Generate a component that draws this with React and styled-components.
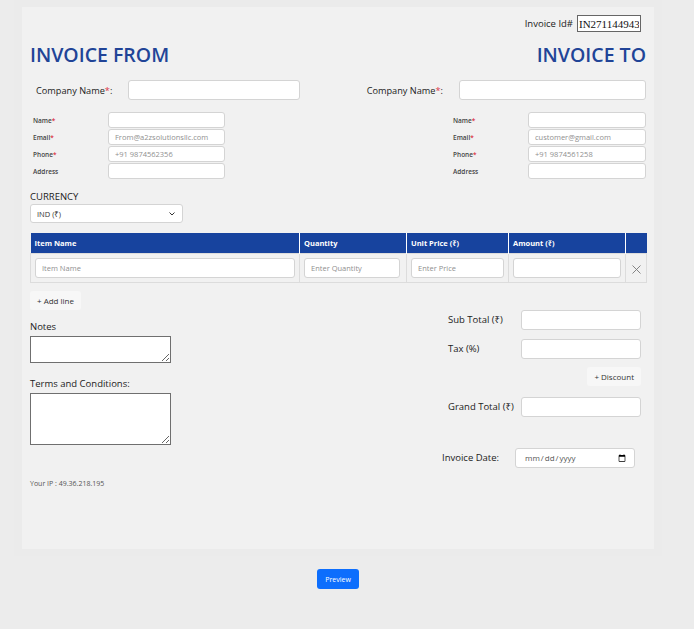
import React from 'react'
import styled, { createGlobalStyle } from 'styled-components'

const GlobalStyle = createGlobalStyle`
    body {
        margin: 0;
        background: #ececec;
        font-family: "Open Sans", "Noto Sans", Arial, sans-serif;
        color: #222;
    }
    * { box-sizing: border-box; }
`

const Page = styled.div`
    width: 694px;
    min-height: 629px;
`

const Wrapper = styled.div`
    margin-left: 14px;
    width: 648px;
    padding: 7px 8px;
    background: #ebebeb;
`

const Card = styled.div`
    background: #f1f1f1;
    height: 542px;
    padding: 8px 8px 0 8px;
`

const IdRow = styled.div`
    display: flex;
    justify-content: flex-end;
    align-items: center;
    gap: 4px;
    padding-right: 5px;
    font-size: 9.5px;
    color: #222;
`

const IdInput = styled.input`
    width: 64px;
    height: 17px;
    border: 1px solid #666;
    padding: 0 1px;
    font-family: "Liberation Serif", serif;
    font-size: 11px;
    color: #111;
    background: #fff;
`

const TitleRow = styled.div`
    display: flex;
    justify-content: space-between;
    margin-top: 8px;
`

const Title = styled.h1`
    margin: 0;
    font-size: 19.5px;
    line-height: 30px;
    font-weight: 600;
    color: #214497;
`

const Parties = styled.div`
    display: flex;
    justify-content: space-between;
    margin-top: 10px;
`

const Party = styled.div`
    display: flex;
    flex-direction: column;
    align-items: ${p => (p.$right ? 'flex-end' : 'flex-start')};
`

const CompanyRow = styled.div`
    display: flex;
    align-items: center;
    gap: 16px;
    padding-left: ${p => (p.$right ? '0' : '6px')};
    font-size: 9.2px;
    color: #222;
`

const Req = styled.span`
    color: #dc3545;
`

const Input = styled.input`
    display: block;
    width: ${p => p.$w || 120}px;
    height: ${p => p.$h || 20}px;
    background: #fff;
    border: 1px solid #d4d4d4;
    border-radius: 3px;
    padding: 0 6px;
    font-family: inherit;
    font-size: 7.5px;
    color: #333;
    outline: none;
    &::placeholder { color: #909090; }
`

const Fields = styled.div`
    display: grid;
    grid-template-columns: 75px ${p => p.$w}px;
    row-gap: 1px;
    align-items: center;
    margin-top: 12px;
    padding-left: ${p => (p.$right ? '0' : '3px')};
`

const SmallLabel = styled.label`
    font-size: 6.5px;
    font-weight: 600;
    color: #444;
`

const CurrencyBlock = styled.div`
    margin-top: 11px;
`

const BlockLabel = styled.div`
    font-size: 9.5px;
    color: #222;
    line-height: 13px;
    margin-top: ${p => p.$mt || 0}px;
`

const SelectWrap = styled.div`
    position: relative;
    width: 153px;
    margin-top: 1px;
`

const Select = styled.select`
    display: block;
    appearance: none;
    width: 153px;
    height: 19px;
    background: #fff;
    border: 1px solid #d4d4d4;
    border-radius: 3px;
    padding: 0 6px;
    font-family: inherit;
    font-size: 7.5px;
    color: #333;
`

const Chevron = styled.svg`
    position: absolute;
    right: 8px;
    top: 8px;
    pointer-events: none;
`

const Table = styled.table`
    width: 616px;
    margin-top: 10px;
    border-collapse: collapse;
    table-layout: fixed;
`

const Th = styled.th`
    background: #17439e;
    color: #fff;
    height: 20px;
    padding: 0 4px;
    text-align: left;
    font-size: 7.5px;
    font-weight: 700;
    border-right: 1px solid #fff;
    &:last-child { border-right: none; }
`

const Td = styled.td`
    height: 29px;
    padding: 0 4px;
    border: 1px solid #dcdcdc;
    vertical-align: middle;
`

const CloseCell = styled(Td)`
    text-align: center;
    color: #777;
`

const LightButton = styled.button`
    display: block;
    height: 19px;
    padding: 0 7px;
    background: #f7f7f7;
    border: none;
    border-radius: 3px;
    font-family: inherit;
    font-size: 8px;
    color: #333;
    cursor: pointer;
`

const AddRow = styled.div`
    margin-top: 8px;
`

const Bottom = styled.div`
    display: flex;
    justify-content: space-between;
    padding-right: 5px;
`

const LeftCol = styled.div`
    display: flex;
    flex-direction: column;
    padding-top: 10px;
`

const RightCol = styled.div`
    display: flex;
    flex-direction: column;
    align-items: flex-end;
`

const Area = styled.textarea`
    width: 141px;
    height: ${p => p.$h}px;
    margin-top: 3px;
    border: 1px solid #6f6f6f;
    border-radius: 0;
    background: #fff;
    resize: vertical;
    display: block;
`

const IpText = styled.div`
    margin-top: 34px;
    font-size: 7px;
    color: #555;
`

const Totals = styled.div`
    display: grid;
    grid-template-columns: 73px 120px;
    row-gap: 9px;
    align-items: center;
    font-size: 9.5px;
    color: #222;
`

const DiscountCell = styled.div`
    grid-column: 2;
    display: flex;
    justify-content: flex-end;
    margin: -1px 0 2px;
`

const DateRow = styled.div`
    display: grid;
    grid-template-columns: 73px 120px;
    align-items: center;
    margin-top: 31px;
    margin-right: 6px;
    font-size: 9.5px;
    color: #222;
`

const DateInput = styled(Input)`
    font-size: 8px;
    padding: 0 6px 0 8px;
    color: #555;
`

const Footer = styled.div`
    width: 648px;
    margin-left: 14px;
    display: flex;
    justify-content: center;
    padding-top: 13px;
`

const PreviewButton = styled.button`
    width: 42px;
    height: 20px;
    background: #0d6efd;
    color: #fff;
    border: none;
    border-radius: 3px;
    font-family: inherit;
    font-size: 7px;
    cursor: pointer;
`

const partyFields = [
    { label: 'Name', req: true },
    { label: 'Email', req: true },
    { label: 'Phone', req: true },
    { label: 'Address', req: false },
]

const PartyBlock = ({ right, companyWidth, fieldWidth, email, phone }) => {
    const placeholders = ['', email, phone, '']
    return (
        <Party $right={right}>
            <CompanyRow $right={right}>
                <span>Company Name<Req>*</Req>:</span>
                <Input $w={companyWidth} />
            </CompanyRow>
            <Fields $w={fieldWidth} $right={right}>
                {partyFields.map((f, i) => (
                    <React.Fragment key={f.label}>
                        <SmallLabel>
                            {f.label}{f.req && <Req>*</Req>}
                        </SmallLabel>
                        <Input $w={fieldWidth} $h={16} placeholder={placeholders[i]} />
                    </React.Fragment>
                ))}
            </Fields>
        </Party>
    )
}

const App = () => {
    return (
        <Page>
            <GlobalStyle />
            <Wrapper>
                <Card>
                    <IdRow>
                        Invoice Id#
                        <IdInput defaultValue="IN271144943" />
                    </IdRow>
                    <TitleRow>
                        <Title>INVOICE FROM</Title>
                        <Title>INVOICE TO</Title>
                    </TitleRow>
                    <Parties>
                        <PartyBlock
                            companyWidth={172}
                            fieldWidth={117}
                            email="From@a2zsolutionsllc.com"
                            phone="+91 9874562356"
                        />
                        <PartyBlock
                            right
                            companyWidth={187}
                            fieldWidth={118}
                            email="customer@gmail.com"
                            phone="+91 9874561258"
                        />
                    </Parties>

                    <CurrencyBlock>
                        <BlockLabel>CURRENCY</BlockLabel>
                        <SelectWrap>
                            <Select defaultValue="IND">
                                <option value="IND">IND (₹)</option>
                            </Select>
                            <Chevron width="6" height="4" viewBox="0 0 6 4">
                                <path d="M0.5 0.5 L3 3 L5.5 0.5" fill="none" stroke="#333" strokeWidth="1" />
                            </Chevron>
                        </SelectWrap>
                    </CurrencyBlock>

                    <Table>
                        <colgroup>
                            <col style={{ width: 269 }} />
                            <col style={{ width: 107 }} />
                            <col style={{ width: 102 }} />
                            <col style={{ width: 117 }} />
                            <col style={{ width: 21 }} />
                        </colgroup>
                        <thead>
                            <tr>
                                <Th>Item Name</Th>
                                <Th>Quantity</Th>
                                <Th>Unit Price (₹)</Th>
                                <Th>Amount (₹)</Th>
                                <Th></Th>
                            </tr>
                        </thead>
                        <tbody>
                            <tr>
                                <Td><Input $w={260} placeholder="Item Name" /></Td>
                                <Td><Input $w={96} placeholder="Enter Quantity" /></Td>
                                <Td><Input $w={93} placeholder="Enter Price" /></Td>
                                <Td><Input $w={108} /></Td>
                                <CloseCell>
                                    <svg width="9" height="9" viewBox="0 0 9 9">
                                        <path d="M0.5 0.5 L8.5 8.5 M8.5 0.5 L0.5 8.5" stroke="#777" strokeWidth="0.9" />
                                    </svg>
                                </CloseCell>
                            </tr>
                        </tbody>
                    </Table>

                    <AddRow>
                        <LightButton>+ Add line</LightButton>
                    </AddRow>

                    <Bottom>
                        <LeftCol>
                            <BlockLabel>Notes</BlockLabel>
                            <Area $h={27} />
                            <BlockLabel $mt={14}>Terms and Conditions:</BlockLabel>
                            <Area $h={52} />
                            <IpText>Your IP : 49.36.218.195</IpText>
                        </LeftCol>
                        <RightCol>
                            <Totals>
                                <span>Sub Total (₹)</span>
                                <Input $w={120} />
                                <span>Tax (%)</span>
                                <Input $w={120} />
                                <DiscountCell>
                                    <LightButton>+ Discount</LightButton>
                                </DiscountCell>
                                <span>Grand Total (₹)</span>
                                <Input $w={120} />
                            </Totals>
                            <DateRow>
                                <span>Invoice Date:</span>
                                <DateInput type="date" $w={120} />
                            </DateRow>
                        </RightCol>
                    </Bottom>
                </Card>
            </Wrapper>
            <Footer>
                <PreviewButton>Preview</PreviewButton>
            </Footer>
        </Page>
    )
}

export default App
